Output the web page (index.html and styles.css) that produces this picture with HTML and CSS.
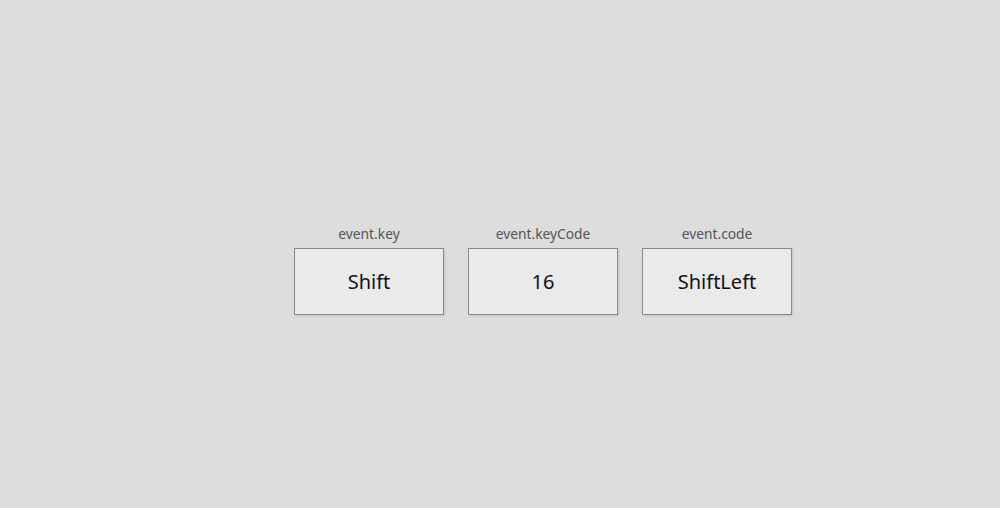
FILE: index.html
```html
<!DOCTYPE html>
<html>
<head>
<meta charset="utf-8">
<link rel="stylesheet" href="styles.css">
</head>
<body>
<div class="page">
  <div class="keys">
    <div class="key">
      <div class="label">event.key</div>
      <div class="box">Shift</div>
    </div>
    <div class="key">
      <div class="label">event.keyCode</div>
      <div class="box">16</div>
    </div>
    <div class="key">
      <div class="label">event.code</div>
      <div class="box">ShiftLeft</div>
    </div>
  </div>
</div>
</body>
</html>
```
FILE: styles.css
```css
html, body {
  margin: 0;
  padding: 0;
  background: #dddddd;
}
.page {
  width: 1000px;
  height: 508px;
  box-sizing: border-box;
  padding-top: 226px;
  padding-left: 294px;
  font-family: "Noto Sans", "Open Sans", sans-serif;
}
.keys {
  display: flex;
  gap: 24px;
}
.key {
  display: flex;
  flex-direction: column;
  align-items: center;
  width: 150px;
}
.label {
  font-size: 13.8px;
  line-height: 16px;
  color: #555555;
  margin-bottom: 6px;
}
.box {
  box-sizing: border-box;
  width: 150px;
  height: 67px;
  border: 1px solid #8a8a8a;
  background: #eaeaea;
  box-shadow: 1px 1px 2px rgba(0,0,0,0.12);
  display: flex;
  align-items: center;
  justify-content: center;
  font-size: 20px;
  color: #111111;
}
```
